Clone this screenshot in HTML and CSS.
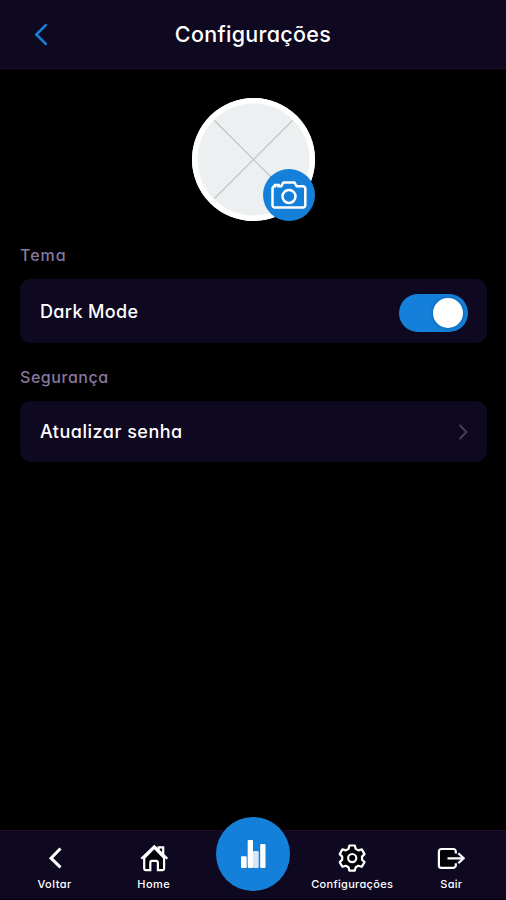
FILE: index.html
```html
<!DOCTYPE html>
<html lang="pt-BR">
<head>
    <meta charset="UTF-8">
    <meta name="viewport" content="width=device-width, initial-scale=1.0">
    <title>Configurações</title>
    <link rel="stylesheet" href="styles.css">
</head>
<body>
    <header class="topbar">
        <a class="back" href="#" aria-label="Voltar">
            <svg width="14" height="24" viewBox="0 0 14 24"><path d="M12.5 2.300 2.300 12.500l10.200 10.200"/></svg>
        </a>
        <h1>Configurações</h1>
    </header>

    <main>
        <div class="avatar">
            <svg class="photo" viewBox="0 0 123 123"><path d="M22.500 22.500 100.500 100.500M100.500 22.500 22.500 100.500"/></svg>
            <button class="camera" aria-label="Alterar foto">
                <svg width="36" height="30" viewBox="0 0 36 30">
                    <path d="M4 6.300V4.900h3.600v1.400h2.600l2.200-3.900h11l2.300 3.900H32a2.300 2.300 0 0 1 2.300 2.300v16.700a2.300 2.300 0 0 1-2.300 2.300H3.800a2.300 2.300 0 0 1-2.300-2.300V8.600a2.300 2.300 0 0 1 2.300-2.300z"/>
                    <circle cx="18" cy="16.400" r="6.500"/>
                </svg>
            </button>
        </div>

        <h2 class="theme-title">Tema</h2>
        <div class="card card-theme">
            <span class="theme-label">Dark Mode</span>
            <button class="switch" role="switch" aria-checked="true" aria-label="Dark Mode"><span class="thumb"></span></button>
        </div>

        <h2 class="security-title">Segurança</h2>
        <a class="card card-password" href="#">
            <span class="password-label">Atualizar senha</span>
            <svg class="chevron" width="10" height="16" viewBox="0 0 10 16"><path d="m1.500 1 7 7-7 7"/></svg>
        </a>
    </main>

    <nav class="tabbar">
        <a href="#">
            <svg width="28" height="28" viewBox="0 0 28 28"><path class="bold" d="M19.500 4.500 10 14.200l9.500 9.200"/></svg>
            <span class="tab-back">Voltar</span>
        </a>
        <a href="#">
            <svg class="filled" width="28" height="28" viewBox="0 0 28 28">
                <path d="M18.600 6V3.300h4.600v7"/>
                <path d="M4.200 14v10.600a1.500 1.500 0 0 0 1.500 1.500h4.600v-7.600a1.700 1.700 0 0 1 1.700-1.700h4.200a1.700 1.700 0 0 1 1.700 1.700v7.600h4.700a1.500 1.500 0 0 0 1.500-1.500V14L14.300 3.800z"/>
                <path class="line" d="M1.300 14.700 14.300 2.300l13 12.400"/>
            </svg>
            <span class="tab-home">Home</span>
        </a>
        <a class="center" href="#" aria-label="Estatísticas">
            <svg width="26" height="30" viewBox="0 0 26 30">
                <rect x="1" y="17.300" width="5.700" height="11.700" rx="1"/>
                <rect x="7.700" y="1" width="5.300" height="28" rx="1"/>
                <rect class="soft" x="13" y="12" width="5.700" height="17" rx="1"/>
                <rect x="20.200" y="5" width="5.300" height="24" rx="1"/>
            </svg>
        </a>
        <a href="#">
            <svg class="filled" width="28" height="28" viewBox="0 0 28 28">
                <path stroke-linejoin="round" d="m11.400 1.500h5.400l.9 3.400 2.700 1.500 3.400-1 2.700 4.700-2.500 2.500v3l2.500 2.500-2.700 4.700-3.400-1-2.700 1.500-.9 3.400h-5.400l-.9-3.400-2.700-1.500-3.400 1-2.700-4.700 2.500-2.500v-3l-2.500-2.500 2.700-4.700 3.400 1 2.700-1.500z"/>
                <circle cx="14.200" cy="14.100" r="4.100"/>
            </svg>
            <span class="tab-settings">Configurações</span>
        </a>
        <a href="#">
            <svg class="filled" width="28" height="28" viewBox="0 0 28 28">
                <path d="M18.800 9.500V7.400a2.400 2.400 0 0 0-2.400-2.400H4.300a2.400 2.400 0 0 0-2.400 2.400v14a2.400 2.400 0 0 0 2.400 2.400h12.100a2.400 2.400 0 0 0 2.400-2.400v-2.200"/>
                <path class="line" d="M10.500 14.300h16M21.300 9.300l5.400 5-5.400 5"/>
            </svg>
            <span class="tab-exit">Sair</span>
        </a>
    </nav>
</body>
</html>
```
FILE: styles.css
```css
* {
    box-sizing: border-box;
}
body {
    margin: 0;
    height: 900px;
    display: flex;
    flex-direction: column;
    overflow: hidden;
    background: #000;
    color: #fff;
    font-family: Inter, "Noto Sans", sans-serif;
    /* single-storey a */
    font-feature-settings: "cv11";
}
a {
    color: inherit;
    text-decoration: none;
}
button {
    border: none;
    padding: 0;
    cursor: pointer;
}
svg {
    display: block;
    fill: none;
    stroke: #fff;
    stroke-width: 2;
}
.topbar {
    height: 69px;
    display: grid;
    grid-template-columns: 74px 1fr 74px;
    align-items: center;
    background: #0f0821;
    border-bottom: 1px solid #1e102c;
}
.back {
    padding-left: 34px;
}
.back svg {
    stroke: #1580d9;
    stroke-width: 2.600;
}
h1 {
    margin: 0;
    text-align: center;
    font-size: 21.500px;
    font-weight: 500;
    letter-spacing: .3px;
}
main {
    flex: 1;
    padding: 29px 19px 0 20px;
}
.avatar {
    position: relative;
    width: 123px;
    height: 123px;
    margin: 0 auto;
}
.photo {
    width: 123px;
    height: 123px;
    border-radius: 50%;
    background: #ecf0f1;
    box-shadow: inset 0 0 0 5.500px #fff;
    stroke: #bfc1c2;
    stroke-width: 1.200;
}
.camera {
    position: absolute;
    right: 0;
    bottom: 0;
    width: 52px;
    height: 52px;
    display: flex;
    align-items: center;
    justify-content: center;
    border-radius: 50%;
    background: #1580d9;
}
.camera svg {
    stroke-width: 2.500;
}
h2 {
    margin: 0;
    height: 24px;
    line-height: 24px;
    font-size: 16px;
    font-weight: 500;
    color: #87779f;
}
.theme-title {
    margin-top: 22px;
    letter-spacing: 1px;
}
.security-title {
    margin-top: 22px;
    letter-spacing: .55px;
}
.card {
    display: flex;
    align-items: center;
    justify-content: space-between;
    padding: 0 19px 0 20px;
    border-radius: 11px;
    background: #0f0821;
    font-size: 18px;
    font-weight: 500;
}
.card-theme {
    height: 64px;
    margin-top: 12px;
}
.card-password {
    height: 61px;
    margin-top: 12px;
}
.theme-label {
    letter-spacing: .35px;
}
.password-label {
    letter-spacing: .5px;
}
.switch {
    width: 69px;
    height: 38px;
    margin-top: 4px;
    padding: 4px 5px;
    display: flex;
    justify-content: flex-end;
    border-radius: 19px;
    background: #1580d9;
}
.thumb {
    width: 30px;
    height: 30px;
    border-radius: 50%;
    background: #fff;
    box-shadow: 0 0 4px rgba(0, 0, 50, .3);
}
.chevron {
    stroke: #494157;
    stroke-width: 1.800;
}
.tabbar {
    height: 70px;
    display: grid;
    grid-template-columns: repeat(5, 99.200px);
    justify-content: center;
    background: #0f0821;
    border-top: 1px solid #210d28;
    border-bottom: 1px solid #05020c;
}
.tabbar a {
    display: flex;
    flex-direction: column;
    align-items: center;
    padding-top: 13px;
    font-size: 11px;
    font-weight: 500;
    line-height: 16px;
    letter-spacing: .3px;
    gap: 4px;
    white-space: nowrap;
}
.tabbar .tab-back,
.tabbar .tab-home {
    letter-spacing: .5px;
}
.tabbar .bold {
    stroke-width: 3;
}
.filled {
    fill: #020106;
    stroke-width: 2.200;
}
.filled .line {
    fill: none;
}
.tabbar .center {
    width: 74px;
    height: 74px;
    margin: -14px auto 0;
    padding: 0;
    justify-content: center;
    border-radius: 50%;
    background: #1580d9;
}
.center svg {
    fill: #fff;
    stroke: none;
}
.center .soft {
    fill: #d5e7fa;
}
```
